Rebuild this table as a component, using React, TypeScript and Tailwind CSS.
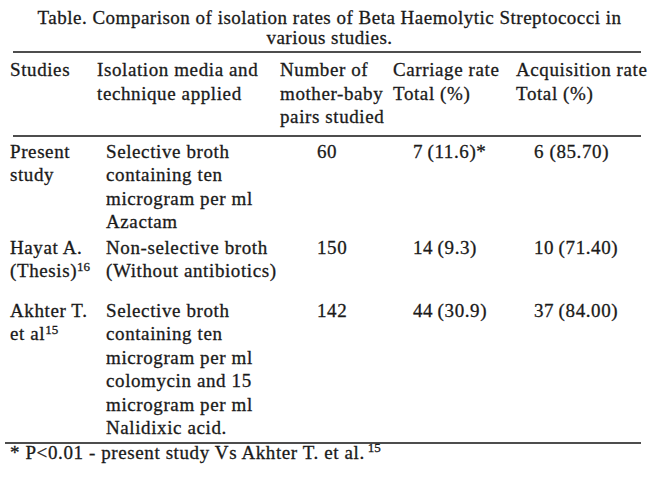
import React from "react";

interface StudyRow {
  study: React.ReactNode[];
  media: string[];
  pairs: string;
  carriage: string;
  acquisition: string;
  spacing: string;
}

const rows: StudyRow[] = [
  {
    study: ["Present", "study"],
    media: ["Selective broth", "containing ten", "microgram per ml", "Azactam"],
    pairs: "60",
    carriage: "7\u2009(11.6)*",
    acquisition: "6 (85.70)",
    spacing: "pt-[3px]",
  },
  {
    study: [
      "Hayat A.",
      <>
        (Thesis)<sup className="text-[13px] tracking-normal">16</sup>
      </>,
    ],
    media: ["Non-selective broth", "(Without antibiotics)"],
    pairs: "150",
    carriage: "14\u2009(9.3)",
    acquisition: "10\u2009(71.40)",
    spacing: "pt-[2px]",
  },
  {
    study: [
      "Akhter T.",
      <>
        et al<sup className="text-[13px] tracking-normal">15</sup>
      </>,
    ],
    media: [
      "Selective broth",
      "containing ten",
      "microgram per ml",
      "colomycin and 15",
      "microgram per ml",
      "Nalidixic acid.",
    ],
    pairs: "142",
    carriage: "44\u2009(30.9)",
    acquisition: "37\u2009(84.00)",
    spacing: "pt-[16px]",
  },
];

const Rule = ({ className = "" }: { className?: string }) => (
  <div className={`h-[2px] bg-[#4d4d4d] mr-[9px] ${className}`} />
);

const Lines = ({ items }: { items: React.ReactNode[] }) => (
  <div>
    {items.map((line, i) => (
      <div key={i} className="whitespace-nowrap">
        {line}
      </div>
    ))}
  </div>
);

export default function App() {
  return (
    <div className="w-[650px] h-[483px] overflow-hidden bg-white text-[#1a1a1a] font-['Liberation_Serif','Times_New_Roman',serif] text-[19px] tracking-[0.6px] [-webkit-text-stroke:0.3px_#1a1a1a]">
      {/* Caption */}
      <div className="pt-[8px] pl-[9px] text-center leading-[20px] tracking-[0.5px]">
        Table. Comparison of isolation rates of Beta Haemolytic Streptococci in
        <br />
        various studies.
      </div>

      <Rule className="mt-[3px] ml-[13px]" />

      {/* Header */}
      <div className="grid grid-cols-[87px_183px_113px_123px_1fr] pl-[10px] pt-[5px] pb-[6px] leading-[23.5px]">
        <Lines items={["Studies"]} />
        <Lines items={["Isolation media and", "technique applied"]} />
        <Lines items={["Number of", "mother-baby", "pairs studied"]} />
        <Lines items={["Carriage rate", "Total (%)"]} />
        <Lines items={["Acquisition rate", "Total (%)"]} />
      </div>

      <Rule className="ml-[13px]" />

      {/* Body */}
      {rows.map((row, i) => (
        <div
          key={i}
          className={`grid grid-cols-[87px_183px_113px_123px_1fr] pl-[10px] leading-[23.5px] ${row.spacing}`}
        >
          <Lines items={row.study} />
          <div className="pl-[9px]">
            <Lines items={row.media} />
          </div>
          <div className="pl-[37px]">{row.pairs}</div>
          <div className="pl-[20px] whitespace-nowrap">{row.carriage}</div>
          <div className="pl-[18px] whitespace-nowrap">{row.acquisition}</div>
        </div>
      ))}

      <Rule className="mt-[2px] ml-[5px]" />

      {/* Footnote */}
      <div className="pl-[10px] leading-[18px]">
        * P&lt;0.01 - present study Vs Akhter T. et al.
        <sup className="text-[13px] tracking-normal ml-[3px]">15</sup>
      </div>
    </div>
  );
}
